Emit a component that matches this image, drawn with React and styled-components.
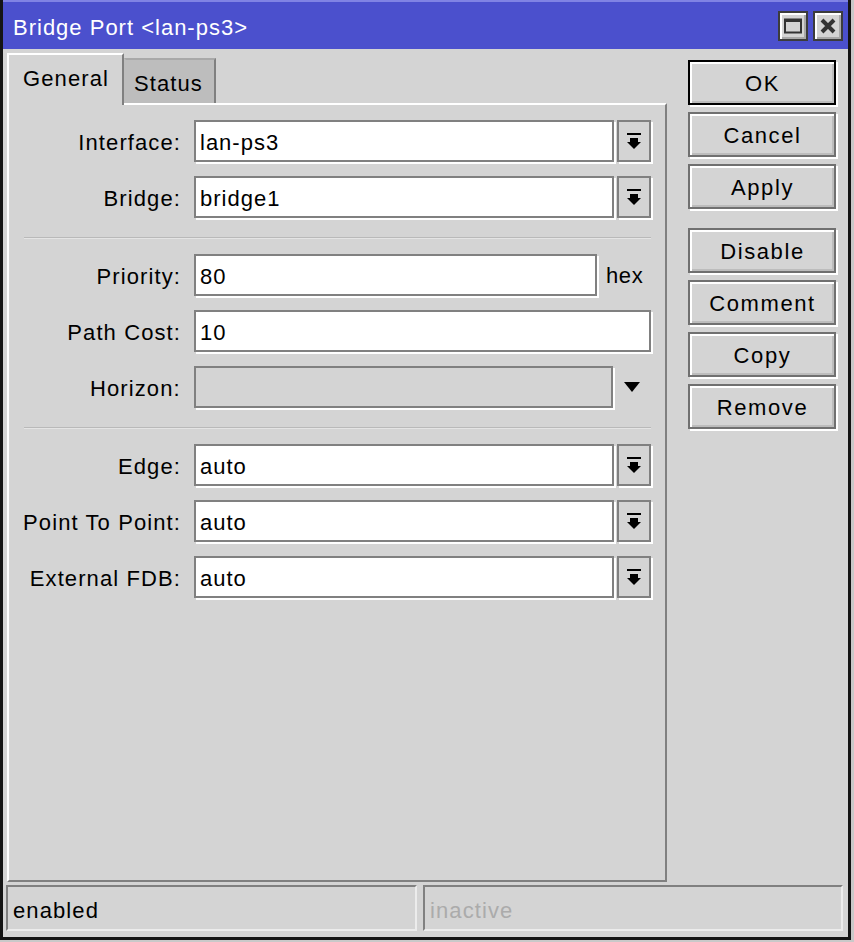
import React from "react";
import styled, { createGlobalStyle } from "styled-components";

const GlobalStyle = createGlobalStyle`
  html, body {
    margin: 0;
    padding: 0;
    background: #c9c9c9;
  }

  * {
    box-sizing: border-box;
  }
`;

const Window = styled.div`
  display: flex;
  flex-direction: column;

  width: 851px;
  height: 940px;

  border: 3px solid #141414;
  border-top: none;

  font-family: "Liberation Sans", Arial, sans-serif;
  font-size: 22px;
  color: #000;
  background: #d4d4d4;
`;

const TitleBar = styled.div`
  display: flex;
  align-items: center;
  justify-content: space-between;

  height: 49px;
  padding: 0 5px 0 10px;

  border-top: 2px solid #8083e4;

  color: #fff;
  background: #4b50cd;
`;

const Title = styled.div`
  padding-top: 5px;
  letter-spacing: 1px;
`;

const TitleButtons = styled.div`
  display: flex;
  gap: 5px;
`;

const TitleButton = styled.div`
  display: grid;
  place-items: center;

  width: 30px;
  height: 30px;

  border: 2px solid #3c3c3c;
  box-shadow: inset 2px 2px 0 #fff, inset -2px -2px 0 #a9a9a9;

  background: #d4d4d4;
`;

const Main = styled.div`
  display: flex;
  flex: 1;

  padding: 4px 0 0 4px;
`;

const LeftColumn = styled.div`
  display: flex;
  flex-direction: column;

  width: 660px;
`;

const Tabs = styled.div`
  display: flex;
  align-items: flex-end;

  height: 50px;
`;

const Tab = styled.div`
  display: flex;
  align-items: center;

  height: ${(p) => (p.active ? "52px" : "45px")};
  margin-bottom: ${(p) => (p.active ? "-2px" : "0")};
  padding: ${(p) => (p.active ? "0 13px 2px 14px" : "4px 11px 0 8px")};

  border-top: 2px solid ${(p) => (p.active ? "#fff" : "#a9a9a9")};
  border-left: 2px solid ${(p) => (p.active ? "#fff" : "transparent")};
  border-right: 2px solid #808080;

  position: relative;
  z-index: ${(p) => (p.active ? 1 : 0)};

  letter-spacing: 1.1px;
  background: ${(p) => (p.active ? "#d4d4d4" : "#bdbdbd")};
`;

const Panel = styled.div`
  display: flex;
  flex-direction: column;
  gap: 14px;

  height: 779px;
  padding: 15px 14px 0 0;

  border: 2px solid;
  border-color: #fff #808080 #808080 #fff;
`;

const Row = styled.div`
  display: flex;
  align-items: center;

  height: 42px;
`;

const Label = styled.div`
  width: 172px;
  margin-right: 13px;
  padding-top: 4px;

  text-align: right;
  letter-spacing: 1.1px;
  white-space: nowrap;
`;

const Field = styled.div`
  display: flex;
  align-items: center;

  width: ${(p) => p.width}px;
  height: 42px;
  padding: 4px 4px 0;

  border: 2px solid #808080;
  box-shadow: 2px 2px 0 #fff;

  letter-spacing: 1px;
  background: ${(p) => (p.disabled ? "#d4d4d4" : "#fff")};
`;

const DropButton = styled.div`
  display: grid;
  place-items: center;

  width: 34px;
  height: 42px;
  margin-left: 3px;

  border: 2px solid #808080;
  box-shadow: 2px 2px 0 #fff;

  background: #d4d4d4;
`;

const Suffix = styled.div`
  margin-left: 9px;
  padding-top: 2px;
  letter-spacing: 0.6px;
`;

const PlainArrow = styled.div`
  display: grid;
  place-items: center;

  width: 38px;
`;

const Separator = styled.div`
  height: 2px;
  margin: 5px 0 1px 15px;

  border-top: 1px solid #b9b9b9;
  border-bottom: 1px solid #e4e4e4;
`;

const ButtonColumn = styled.div`
  display: flex;
  flex-direction: column;
  gap: 7px;

  width: 148px;
  margin-left: 21px;
  padding-top: 7px;
`;

const Button = styled.div`
  display: grid;
  place-items: center;

  height: 45px;
  margin-top: ${(p) => (p.spaced ? "12px" : "0")};
  padding: 3px 0 0 1px;

  border: 2px solid ${(p) => (p.primary ? "#000" : "#707070")};
  box-shadow: inset 2px 2px 0 #fff, inset -2px -2px 0 #bcbcbc,
    2px 2px 0 #fff;

  letter-spacing: 1.6px;
  background: #d4d4d4;
`;

const StatusBar = styled.div`
  display: flex;
  gap: 6px;

  margin-top: 3px;
  padding: 0 3px 6px 3px;
`;

const StatusField = styled.div`
  display: flex;
  align-items: center;

  width: ${(p) => p.width}px;
  height: 46px;
  padding: 5px 0 0 5px;

  border: 2px solid;
  border-color: #808080 #ececec #ececec #808080;

  letter-spacing: 1.1px;
  color: ${(p) => (p.muted ? "#ababab" : "#000")};
`;

function DropIcon() {
  return (
    <svg width="14" height="17" viewBox="0 0 14 17">
      <rect x="0" y="0" width="14" height="2" fill="#000" />
      <rect x="3" y="5" width="8" height="4" fill="#000" />
      <polygon points="0,9 14,9 7,16" fill="#000" />
    </svg>
  );
}

function ComboRow({ label, value }) {
  return (
    <Row>
      <Label>{label}</Label>
      <Field width={420}>{value}</Field>
      <DropButton>
        <DropIcon />
      </DropButton>
    </Row>
  );
}

export default function App() {
  return (
    <>
      <GlobalStyle />
      <Window>
        <TitleBar>
          <Title>Bridge Port &lt;lan-ps3&gt;</Title>
          <TitleButtons>
            <TitleButton>
              <svg width="18" height="16" viewBox="0 0 18 16">
                <rect x="1" y="1.5" width="16" height="13" fill="none" stroke="#333" strokeWidth="2" />
                <rect x="1" y="1" width="16" height="3" fill="#333" />
              </svg>
            </TitleButton>
            <TitleButton>
              <svg width="16" height="16" viewBox="0 0 16 16">
                <path d="M2 2 L14 14 M14 2 L2 14" stroke="#333" strokeWidth="4" />
              </svg>
            </TitleButton>
          </TitleButtons>
        </TitleBar>

        <Main>
          <LeftColumn>
            <Tabs>
              <Tab active>General</Tab>
              <Tab>Status</Tab>
            </Tabs>

            <Panel>
              <ComboRow label="Interface:" value="lan-ps3" />
              <ComboRow label="Bridge:" value="bridge1" />

              <Separator />

              <Row>
                <Label>Priority:</Label>
                <Field width={403}>80</Field>
                <Suffix>hex</Suffix>
              </Row>
              <Row>
                <Label>Path Cost:</Label>
                <Field width={457}>10</Field>
              </Row>
              <Row>
                <Label>Horizon:</Label>
                <Field width={420} disabled />
                <PlainArrow>
                  <svg width="16" height="10" viewBox="0 0 16 10">
                    <polygon points="0,0 16,0 8,10" fill="#000" />
                  </svg>
                </PlainArrow>
              </Row>

              <Separator />

              <ComboRow label="Edge:" value="auto" />
              <ComboRow label="Point To Point:" value="auto" />
              <ComboRow label="External FDB:" value="auto" />
            </Panel>
          </LeftColumn>

          <ButtonColumn>
            <Button primary>OK</Button>
            <Button>Cancel</Button>
            <Button>Apply</Button>
            <Button spaced>Disable</Button>
            <Button>Comment</Button>
            <Button>Copy</Button>
            <Button>Remove</Button>
          </ButtonColumn>
        </Main>

        <StatusBar>
          <StatusField width={411}>enabled</StatusField>
          <StatusField width={420} muted>
            inactive
          </StatusField>
        </StatusBar>
      </Window>
    </>
  );
}
